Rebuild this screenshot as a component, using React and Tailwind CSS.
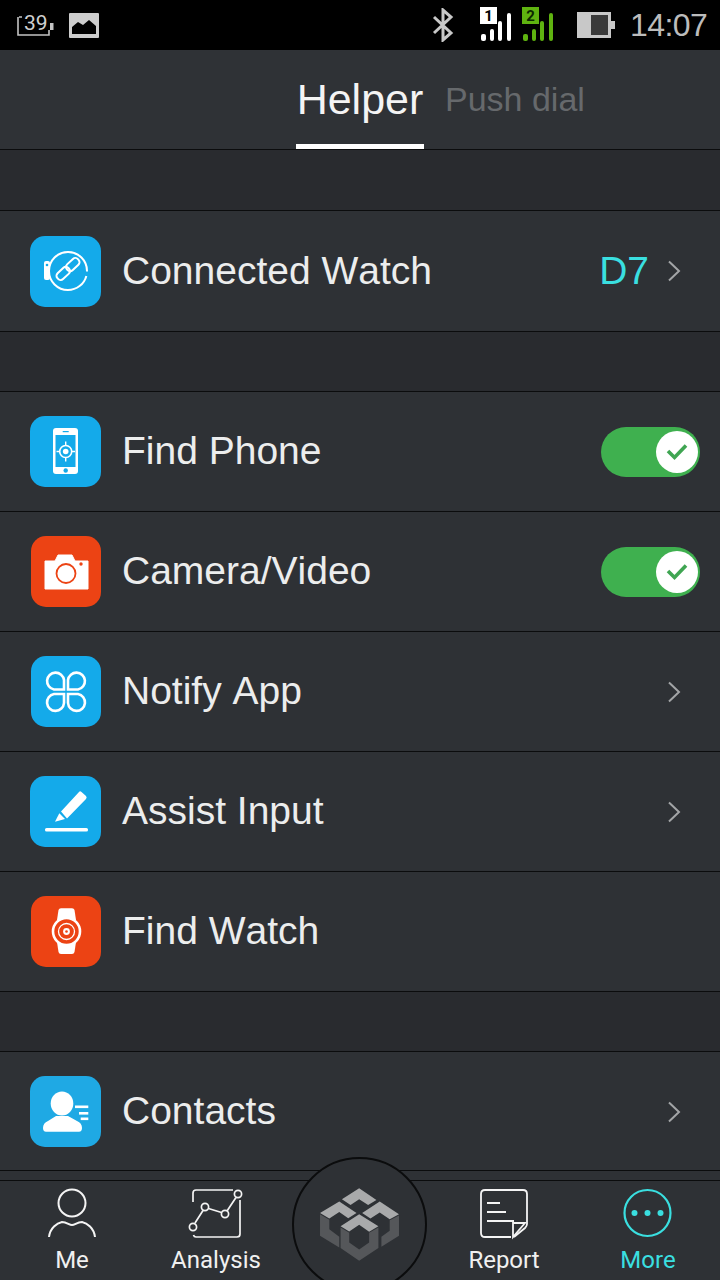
import React from 'react'

const Chevron = () => (
  <svg width="14" height="22" viewBox="0 0 14 22" fill="none" stroke="#a3a5a7" strokeWidth="2">
    <path d="M2 1.5 L12 11 L2 20.5" />
  </svg>
)

const Toggle = () => (
  <div className="w-[99px] h-[50px] rounded-full bg-[#3fb04f] flex items-center justify-end pr-[2px] mr-[20px]">
    <div className="w-[42px] h-[42px] rounded-full bg-white flex items-center justify-center">
      <svg width="22" height="18" viewBox="0 0 22 18" fill="none" stroke="#3fa552" strokeWidth="3.6">
        <path d="M2 8 L8.5 14.5 L20 2.5" />
      </svg>
    </div>
  </div>
)

const WatchLink = () => (
  <svg width="71" height="71" viewBox="0 0 71 71" fill="none" stroke="#fff">
    <circle cx="38" cy="35" r="19" strokeWidth="2" strokeDasharray="115 4.4" strokeDashoffset="-5" />
    <rect x="14" y="25" width="6" height="19" rx="2" fill="#fff" stroke="none" />
    <circle cx="17" cy="29" r="1.3" fill="#14aaea" stroke="none" />
    <g strokeWidth="2" transform="rotate(-43 38 33)">
      <rect x="24" y="29" width="15" height="8" rx="3.5" />
      <rect x="37" y="29" width="15" height="8" rx="3.5" />
    </g>
  </svg>
)

const PhoneFind = () => (
  <svg width="71" height="71" viewBox="0 0 71 71" fill="none">
    <rect x="23" y="12" width="25" height="46" rx="3" fill="#fff" />
    <rect x="25.5" y="19" width="20" height="32" fill="#14aaea" />
    <circle cx="35.7" cy="54.5" r="2.2" fill="#14aaea" />
    <rect x="32.7" y="15" width="6" height="1.2" fill="#14aaea" />
    <circle cx="35.7" cy="35.5" r="6" stroke="#fff" strokeWidth="1.6" />
    <circle cx="35.7" cy="35.5" r="2.8" fill="#fff" />
    <path d="M35.7 25.5 V29.5 M35.7 41.5 V45.5 M26.5 35.5 H29.7 M41.7 35.5 H45" stroke="#fff" strokeWidth="1.4" />
  </svg>
)

const Camera = () => (
  <svg width="70" height="71" viewBox="0 0 70 71" fill="none">
    <path d="M14 25 H24 L27 19 H41 L44 25 H57 V53 H14 Z" fill="#fff" stroke="#fff" strokeLinejoin="round" />
    <circle cx="35" cy="37.5" r="9.5" stroke="#ec4314" strokeWidth="1.8" />
    <circle cx="50" cy="28" r="1.7" fill="#ec4314" />
  </svg>
)

const Clover = () => (
  <svg width="70" height="71" viewBox="0 0 70 71" fill="none" stroke="#fff" strokeWidth="2.6">
    <path d="M33 33.5 H23 A8.5 8.5 0 1 1 33 24 Z" />
    <path d="M37 33.5 V24 A8.5 8.5 0 1 1 47 33.5 Z" />
    <path d="M33 38 V47 A8.5 8.5 0 1 1 23 38 Z" />
    <path d="M37 38 H47 A8.5 8.5 0 1 1 37 47 Z" />
  </svg>
)

const Pencil = () => (
  <svg width="71" height="71" viewBox="0 0 71 71" fill="#fff">
    <path d="M31 35.5 L49 16 Q50 14.7 51.5 16 L56 20 Q57.3 21.5 56 23 L37 42.5 Z" />
    <path d="M29.3 37.3 L35 43 L25 45.7 Z" />
    <rect x="15" y="52" width="43" height="3.6" rx="1.6" />
  </svg>
)

const WatchFind = () => (
  <svg width="70" height="71" viewBox="0 0 70 71" fill="none">
    <path d="M26 24 L27.5 14 Q28 12.3 30 12.3 H41 Q43 12.3 43.5 14 L45 24 Z" fill="#fff" />
    <path d="M26 46 L27.5 56 Q28 58 30 58 H41 Q43 58 43.5 56 L45 46 Z" fill="#fff" />
    <circle cx="35.5" cy="35.5" r="13.5" fill="#ec4314" stroke="#fff" strokeWidth="2.6" />
    <circle cx="35.5" cy="35.5" r="8" stroke="#fff" strokeWidth="1.3" />
    <circle cx="35.5" cy="35.5" r="3.4" fill="#fff" />
    <circle cx="35.5" cy="35.5" r="1.3" fill="#ec4314" />
  </svg>
)

const Contact = () => (
  <svg width="71" height="71" viewBox="0 0 71 71" fill="#fff">
    <ellipse cx="32" cy="27.5" rx="11.3" ry="12" />
    <path d="M13 52 Q13 47 18 45 L26 40 H38 L47 45 Q52 47 52 52 Q52 55.7 49 55.7 H16 Q13 55.7 13 52 Z" />
    <rect x="45" y="29.5" width="13.3" height="2.6" />
    <rect x="49" y="36" width="9.3" height="2.6" />
    <rect x="50.7" y="41.5" width="7.6" height="2.6" />
  </svg>
)

const Row = ({ icon, box, label, height = 'h-[120px]', children }) => (
  <div className={`bg-[#2e3135] flex items-center border-b border-[#0b0c0d] pl-[30px] ${height}`}>
    <div className={`h-[71px] rounded-[15px] ${box}`}>{icon}</div>
    <div className="flex-1 ml-[21px] text-[39px] text-[#eceded] [font-kerning:none] font-['Liberation_Sans',sans-serif]">{label}</div>
    {children}
  </div>
)

const ChevronSlot = () => (
  <div className="mr-[39px] flex items-center"><Chevron /></div>
)

const Gap = ({ height = 'h-[60px]' }) => <div className={`bg-[#292b2f] border-b border-[#0b0c0d] ${height}`} />

const Signal = ({ n, color, box, text }) => (
  <svg width="36" height="36" viewBox="0 0 36 36">
    <rect x="0" y="0" width="17" height="17" fill={box} />
    <text x="8.5" y="14" textAnchor="middle" fontSize="15" fontWeight="700" fill={text} fontFamily="Roboto, sans-serif">{n}</text>
    <rect x="1" y="27" width="5" height="7" rx="2" fill={color} />
    <rect x="10" y="22" width="4" height="12" rx="2" fill={color} />
    <rect x="18" y="14" width="4" height="20" rx="2" fill={color} />
    <rect x="27" y="6" width="4" height="28" rx="2" fill={color} />
  </svg>
)

const StatusBar = () => (
  <div className="h-[50px] bg-black flex items-center">
    <div className="relative ml-[17px] w-[37px] h-[24px] pl-[7px] text-[21px] leading-[20px] text-[#d0d0d0] font-['Roboto',sans-serif]">
      <svg className="absolute left-0 top-0" width="37" height="24" viewBox="0 0 37 24" fill="none" stroke="#c4c4c4" strokeWidth="1.6">
        <path d="M5 4 H2 M1 4 V22 H32 V17" />
        <rect x="33" y="10" width="3.5" height="7" fill="#c4c4c4" stroke="none" />
      </svg>
      <span className="relative">39</span>
    </div>
    <svg className="ml-[15px]" width="30" height="25" viewBox="0 0 30 25">
      <rect width="30" height="25" rx="1" fill="#cdcdcd" />
      <path d="M3 21 V14 L9 9 L14 12 L20 7 L27 13 V21 Z" fill="#000" />
    </svg>
    <svg className="ml-[333px]" width="22" height="34" viewBox="0 0 22 34" fill="none" stroke="#c8c8c8" strokeWidth="3">
      <path d="M2 9 L19 25 L11 32 V2 L19 9 L2 25" />
    </svg>
    <div className="ml-[26px]"><Signal n="1" color="#fff" box="#fff" text="#000" /></div>
    <div className="ml-[6px]"><Signal n="2" color="#5fb310" box="#5fb310" text="#0c2a00" /></div>
    <svg className="ml-[19px]" width="38" height="26" viewBox="0 0 38 26">
      <rect width="34" height="26" fill="#c8c8c8" />
      <rect x="14" y="3" width="17" height="20" fill="#3a3a3a" />
      <rect x="34" y="9" width="4" height="8" fill="#c8c8c8" />
    </svg>
    <div className="ml-[15px] text-[32px] tracking-[-0.6px] text-[#bcbcbc] leading-none font-['Liberation_Sans',sans-serif]">14:07</div>
  </div>
)

const NavItem = ({ label, active, children }) => (
  <div className="w-[144px] flex flex-col items-center pt-[7px]">
    <div className="h-[52px]">{children}</div>
    <div className={`text-[24px] leading-[28px] mt-[6px] ${active ? 'text-[#3adfe0]' : 'text-[#f0f0f0]'}`}>{label}</div>
  </div>
)

const Logo = () => (
  <svg width="83" height="75" viewBox="115 108 248 226">
    <g fill="#a9aaab">
      <path d="M238 112 L290 147 L265 162 L238 145 L212 162 L186 145 Z" />
      <path d="M178 152 L230 186 L205 202 L178 183 L148 203 L120 186 Z" />
      <path d="M300 152 L358 190 L330 205 L300 185 L272 203 L247 186 Z" />
      <path d="M238 190 L296 226 L268 243 L238 222 L208 242 L182 226 Z" />
    </g>
    <g fill="#55575a">
      <path d="M120 190 L148 207 L148 235 L178 258 L178 290 L120 255 Z" />
      <path d="M358 194 L358 255 L305 288 L305 258 L330 240 L330 208 Z" />
      <path d="M182 230 L208 246 L208 275 L238 296 L268 275 L268 246 L296 230 L296 292 L238 330 L182 292 Z" />
    </g>
  </svg>
)

const App = () => {
  return (
    <div className="relative w-[720px] h-[1280px] overflow-hidden bg-[#2e3135] font-['Roboto',sans-serif]">
      <StatusBar />

      <div className="h-[100px] bg-[#2f3236] border-b border-[#0b0c0d] flex items-end pl-[296px] font-['Liberation_Sans',sans-serif]">
        <div className="w-[128px] h-[99px] border-b-[5px] border-white flex items-center justify-center pt-[5px]">
          <span className="text-[43px] text-[#f4f4f4] leading-none">Helper</span>
        </div>
        <div className="ml-[21px] h-[99px] flex items-center pb-[1px]">
          <span className="text-[34px] text-[#66696c] leading-none">Push dial</span>
        </div>
      </div>

      <Gap height="h-[61px]" />
      <Row icon={<WatchLink />} box="w-[71px] bg-[#14aaea]" label="Connected Watch" height="h-[121px]">
        <span className="text-[39px] text-[#3adfe0] mr-[18px] font-['Liberation_Sans',sans-serif]">D7</span>
        <ChevronSlot />
      </Row>
      <Gap />
      <Row icon={<PhoneFind />} box="w-[71px] bg-[#14aaea]" label="Find Phone"><Toggle /></Row>
      <Row icon={<Camera />} box="w-[70px] ml-[1px] bg-[#ec4314]" label="Camera/Video"><Toggle /></Row>
      <Row icon={<Clover />} box="w-[70px] ml-[1px] bg-[#14aaea]" label="Notify App"><ChevronSlot /></Row>
      <Row icon={<Pencil />} box="w-[71px] bg-[#14aaea]" label="Assist Input"><ChevronSlot /></Row>
      <Row icon={<WatchFind />} box="w-[70px] ml-[1px] bg-[#ec4314]" label="Find Watch" />
      <Gap />
      <Row icon={<Contact />} box="w-[71px] bg-[#1fa9e4]" label="Contacts" height="h-[119px] pt-[1px]"><ChevronSlot /></Row>

      <div className="h-[10px] bg-[#2e3135] border-b border-[#0b0c0d]" />

      <div className="flex bg-[#2e3135] h-[99px]">
        <NavItem label="Me">
          <svg width="50" height="52" viewBox="0 0 50 52" fill="none" stroke="#f4f4f4" strokeWidth="2">
            <circle cx="25" cy="15" r="13.5" />
            <path d="M2 49 C3 40 10 35 15 34 C20 34 22 37 25 37 C28 37 30 34 35 34 C40 35 47 40 48 49" />
          </svg>
        </NavItem>
        <NavItem label="Analysis">
          <svg width="56" height="52" viewBox="0 0 56 52" fill="none" stroke="#f4f4f4" strokeWidth="1.7">
            <path d="M5 14 V5 Q5 2 8 2 H45" />
            <path d="M52 12 V46 Q52 49 49 49 H8 Q6 49 5.5 47" />
            <circle cx="5" cy="39" r="3.6" />
            <circle cx="17" cy="19" r="3.6" />
            <circle cx="37" cy="26" r="3.6" />
            <circle cx="50" cy="6" r="3.6" />
            <path d="M7 35 L15 22.5 M20.5 20.5 L33.5 24.5 M39 23 L48 9.5" />
          </svg>
        </NavItem>
        <div className="w-[144px]" />
        <NavItem label="Report">
          <svg width="50" height="52" viewBox="0 0 50 52" fill="none" stroke="#f4f4f4" strokeWidth="1.8">
            <path d="M32 49 H6 Q2 49 2 45 V6 Q2 2 6 2 H44 Q48 2 48 6 V36 Q48 38 46 40 L35 49" />
            <path d="M34 35 H46 L34 49 Z" />
            <path d="M8 15 H21 M8 24 H27 M8 33 H35" />
          </svg>
        </NavItem>
        <NavItem label="More" active>
          <svg width="50" height="52" viewBox="0 0 50 52" fill="none">
            <circle cx="24.5" cy="25" r="23" stroke="#3adfe0" strokeWidth="2.2" />
            <circle cx="11.5" cy="25" r="3" fill="#3adfe0" />
            <circle cx="24.5" cy="25" r="3" fill="#3adfe0" />
            <circle cx="37.5" cy="25" r="3" fill="#3adfe0" />
          </svg>
        </NavItem>
      </div>

      <div className="absolute left-[292px] top-[1157px] w-[135px] h-[135px] rounded-full bg-[#2e3135] border-2 border-[#0b0c0d] flex items-center justify-center">
        <Logo />
      </div>
    </div>
  )
}

export default App
